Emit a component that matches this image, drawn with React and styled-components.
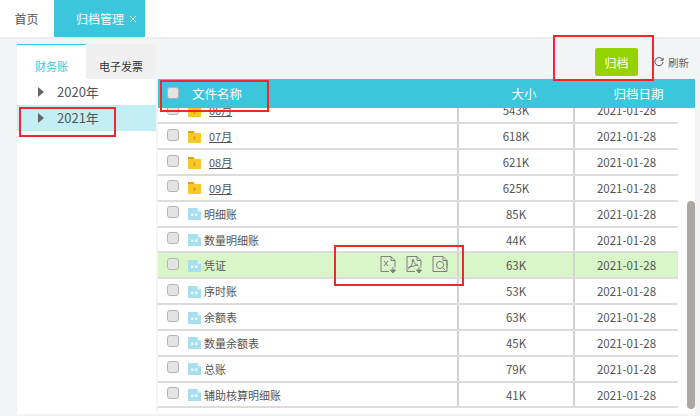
import React from 'react';
import styled, {createGlobalStyle} from 'styled-components';

const GlobalStyle = createGlobalStyle`
    html, body {
        margin: 0;
        padding: 0;
        background: #f2f4f6;
    }
    body {
        font-family: "Noto Sans CJK SC", "Noto Sans", sans-serif;
        font-size: 11px;
        color: #555;
    }
`;

const Page = styled.div`
    position: relative;
    width: 700px;
    height: 416px;
    overflow: hidden;
    display: flex;
    flex-direction: column;
`;

const TopBar = styled.div`
    height: 37px;
    flex: none;
    display: flex;
    background: #fff;
    border-bottom: 2px solid #eceded;
`;

const HomeTab = styled.div`
    width: 53px;
    display: flex;
    align-items: center;
    justify-content: center;
    font-size: 12px;
    color: #555;
`;

const ActiveTab = styled.div`
    width: 91px;
    margin-left: 1px;
    padding-left: 22px;
    box-sizing: border-box;
    display: flex;
    align-items: center;
    gap: 5px;
    font-size: 12px;
    color: #fff;
    background: #3cc6dd;
`;

const Main = styled.div`
    flex: 1;
    display: flex;
    gap: 2px;
    padding: 0 5px 2px 17px;
    min-height: 0;
`;

const Side = styled.div`
    width: 139px;
    flex: none;
    margin-top: 5px;
    background: #fff;
    display: flex;
    flex-direction: column;
`;

const SideTabs = styled.div`
    height: 35px;
    flex: none;
    display: flex;
`;

const SideTab = styled.div`
    width: ${({ active }) => (active ? "69px" : "70px")};
    display: flex;
    align-items: center;
    justify-content: center;
    font-size: 11px;
    padding-top: 7px;
    box-sizing: border-box;
    color: ${({ active }) => (active ? "#3cc6dd" : "#333")};
    background: ${({ active }) => (active ? "#fff" : "#f0f0f0")};
    border-top: 1px solid ${({ active }) => (active ? "#3cc6dd" : "#f0f0f0")};
`;

const TreeRow = styled.div`
    height: 26px;
    padding-bottom: 2px;
    box-sizing: border-box;
    display: flex;
    align-items: center;
    gap: 13px;
    padding-left: 21px;
    font-size: 13px;
    color: #555;
    background: ${({ selected }) => (selected ? "#c3eff4" : "#fff")};
`;

const Arrow = styled.span`
    width: 0;
    height: 0;
    margin-top: 2px;
    border-left: 6px solid #666;
    border-top: 5.5px solid transparent;
    border-bottom: 5.5px solid transparent;
`;

const Content = styled.div`
    flex: 1;
    min-width: 0;
    display: flex;
    flex-direction: column;
`;

const Toolbar = styled.div`
    height: 40px;
    flex: none;
    display: flex;
    align-items: flex-start;
    justify-content: flex-end;
    padding: 9px 6px 0 0;
    box-sizing: border-box;
`;

const ArchiveButton = styled.div`
    width: 43px;
    height: 28px;
    background: #94d200;
    border-radius: 2px;
    color: #fff;
    font-size: 12px;
    display: flex;
    align-items: center;
    justify-content: center;
`;

const Refresh = styled.div`
    height: 28px;
    margin-left: 16px;
    display: flex;
    align-items: center;
    gap: 4px;
    font-size: 10.5px;
    color: #666;
`;

const TableHead = styled.div`
    height: 29px;
    flex: none;
    display: grid;
    grid-template-columns: 300px 132px 1fr;
    padding-right: 8px;
    background: #3cc6dd;
    color: #fff;
    font-size: 12.5px;
    align-items: center;
    text-align: center;
`;

const HeadName = styled.div`
    display: flex;
    align-items: center;
    gap: 13px;
    padding-left: 9px;
`;

const Body = styled.div`
    position: relative;
    flex: 1;
    min-height: 0;
    overflow: hidden;
    background: #fff;
`;

const Rows = styled.div`
    width: 520px;
    margin-top: -9.5px;
`;

const Row = styled.div`
    height: 25.83px;
    box-sizing: border-box;
    display: grid;
    grid-template-columns: 299px 116px 1fr;
    border-bottom: 2px solid #dcdcdc;
    background: ${({ highlight }) => (highlight ? "#d9f6c8" : "#fff")};
`;

const NameCell = styled.div`
    position: relative;
    display: flex;
    align-items: center;
    padding-left: 9px;
    font-size: 11px;
    color: #555;
`;

const Check = styled.span`
    width: 12px;
    height: 12px;
    flex: none;
    box-sizing: border-box;
    margin-top: ${({ head }) => (head ? "-2px" : "-3px")};
    background: #e4e4e4;
    border: 1px solid #b4b4b4;
    border-radius: 3px;
`;

const FileIcon = styled.svg`
    width: 13px;
    height: 13px;
    flex: none;
    margin-left: 9px;
    margin-right: ${({ folder }) => (folder ? "8px" : "3px")};
`;

const MonthName = styled.span`
    text-decoration: underline;
`;

const Actions = styled.div`
    position: absolute;
    left: 222px;
    top: 2px;
    display: flex;
    gap: 9px;
`;

const ActionIcon = styled.svg`
    width: 17px;
    height: 19px;
`;

const Cell = styled.div`
    display: flex;
    align-items: center;
    justify-content: center;
    border-left: 2px solid #d2d2d2;
    font-size: 11.5px;
    color: #555;
`;

const Thumb = styled.div`
    position: absolute;
    top: 93px;
    right: 0;
    width: 8px;
    height: 208px;
    border-radius: 4px;
    background: #aaa8a4;
`;

const Mark = styled.div`
    position: absolute;
    left: ${({ x }) => x}px;
    top: ${({ y }) => y}px;
    width: ${({ w }) => w}px;
    height: ${({ h }) => h}px;
    box-sizing: border-box;
    border: 2px solid #f0282d;
    pointer-events: none;
`;

const FolderGlyph = () => (
    <FileIcon folder viewBox="0 0 13 13">
        <path d="M0 1h5.5l1 2H13v10H0z" fill="#fcc62d" />
        <path d="M0 1h5.5l1 2H0z" fill="#e0a30f" />
        <rect x="5.5" y="6.5" width="2" height="3.5" fill="#d9a317" />
    </FileIcon>
);

const SheetGlyph = () => (
    <FileIcon viewBox="0 0 13 13">
        <path d="M0 1h9.5l3.5 3.5V13H0z" fill="#a8dfee" />
        <path d="M9.5 1L13 4.5H9.5z" fill="#e0f5fa" />
        <rect x="3" y="6.5" width="2.5" height="2.5" fill="#e8f8fb" />
        <rect x="7" y="6.5" width="2.5" height="2.5" fill="#e8f8fb" />
    </FileIcon>
);

const PageIcon = ({ children }) => (
    <ActionIcon viewBox="0 0 17 19" fill="none" stroke="#808080" strokeWidth="1">
        <path d="M1 1.5h10l4 4v7M11 1.5v4h4M1 1.5v15h8" />
        {children}
    </ActionIcon>
);

const DownArrow = () => (
    <path d="M13 12v4M10.5 15h5l-2.5 3z" fill="#808080" />
);

const rows = [
    { name: "06月", size: "543K", folder: true },
    { name: "07月", size: "618K", folder: true },
    { name: "08月", size: "621K", folder: true },
    { name: "09月", size: "625K", folder: true },
    { name: "明细账", size: "85K" },
    { name: "数量明细账", size: "44K" },
    { name: "凭证", size: "63K", highlight: true },
    { name: "序时账", size: "53K" },
    { name: "余额表", size: "63K" },
    { name: "数量余额表", size: "45K" },
    { name: "总账", size: "79K" },
    { name: "辅助核算明细账", size: "41K" },
];

export default function App() {
    return (
        <>
            <GlobalStyle />
            <Page>
                <TopBar>
                    <HomeTab>首页</HomeTab>
                    <ActiveTab>
                        归档管理
                        <svg width="8" height="8" viewBox="0 0 8 8" stroke="#fff" strokeWidth="1">
                            <path d="M1 1l6 6M7 1L1 7" />
                        </svg>
                    </ActiveTab>
                </TopBar>
                <Main>
                    <Side>
                        <SideTabs>
                            <SideTab active>财务账</SideTab>
                            <SideTab>电子发票</SideTab>
                        </SideTabs>
                        <TreeRow><Arrow />2020年</TreeRow>
                        <TreeRow selected><Arrow />2021年</TreeRow>
                    </Side>
                    <Content>
                        <Toolbar>
                            <ArchiveButton>归档</ArchiveButton>
                            <Refresh>
                                <svg width="10" height="10" viewBox="0 0 11 11" fill="none" stroke="#555" strokeWidth="1.1">
                                    <path d="M9.6 3.2A4.5 4.5 0 1 0 10 5.5" />
                                    <path d="M10 0.8v2.8H7.2" />
                                </svg>
                                刷新
                            </Refresh>
                        </Toolbar>
                        <TableHead>
                            <HeadName><Check head />文件名称</HeadName>
                            <div>大小</div>
                            <div>归档日期</div>
                        </TableHead>
                        <Body>
                            <Rows>
                                {rows.map((r) => (
                                    <Row key={r.name} highlight={r.highlight}>
                                        <NameCell>
                                            <Check />
                                            {r.folder ? <FolderGlyph /> : <SheetGlyph />}
                                            {r.folder ? <MonthName>{r.name}</MonthName> : r.name}
                                            {r.highlight && (
                                                <Actions>
                                                    <PageIcon>
                                                        <path d="M4 6l4 5M8 6l-4 5" />
                                                        <DownArrow />
                                                    </PageIcon>
                                                    <PageIcon>
                                                        <path d="M3 13c2-1 4-5 3.5-8 0-1 1-1 1 0 0 3 2 5 5 5.5M3 13c-1 1-1 0 0-1l9-2" />
                                                        <DownArrow />
                                                    </PageIcon>
                                                    <PageIcon>
                                                        <path d="M9 16.5h6v-11" />
                                                        <circle cx="8" cy="10" r="3.6" />
                                                        <path d="M10.6 12.6l2.6 2.6" />
                                                    </PageIcon>
                                                </Actions>
                                            )}
                                        </NameCell>
                                        <Cell>{r.size}</Cell>
                                        <Cell>2021-01-28</Cell>
                                    </Row>
                                ))}
                            </Rows>
                            <Thumb />
                        </Body>
                    </Content>
                </Main>
                <Mark x={160} y={80} w={109} h={32} />
                <Mark x={19} y={107} w={97} h={30} />
                <Mark x={553} y={35} w={101} h={46} />
                <Mark x={334} y={245} w={130} h={41} />
            </Page>
        </>
    );
}
